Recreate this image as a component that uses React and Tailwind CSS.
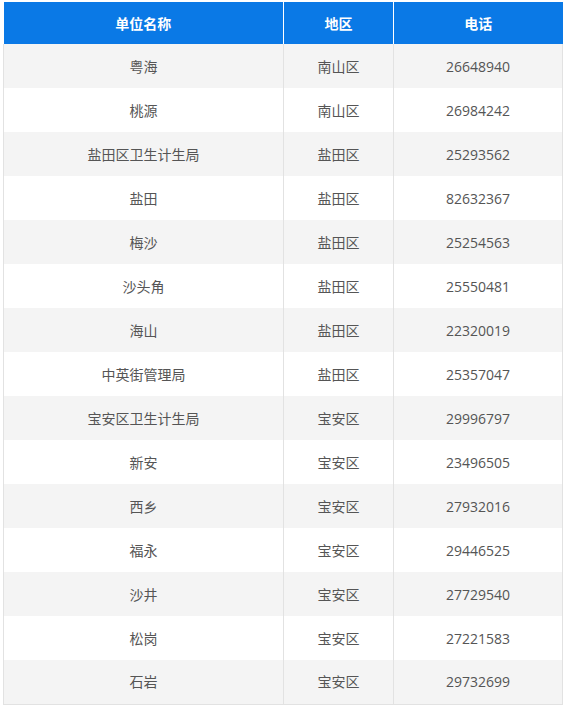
import React from "react";

const rows = [
  ["粤海", "南山区", "26648940"],
  ["桃源", "南山区", "26984242"],
  ["盐田区卫生计生局", "盐田区", "25293562"],
  ["盐田", "盐田区", "82632367"],
  ["梅沙", "盐田区", "25254563"],
  ["沙头角", "盐田区", "25550481"],
  ["海山", "盐田区", "22320019"],
  ["中英街管理局", "盐田区", "25357047"],
  ["宝安区卫生计生局", "宝安区", "29996797"],
  ["新安", "宝安区", "23496505"],
  ["西乡", "宝安区", "27932016"],
  ["福永", "宝安区", "29446525"],
  ["沙井", "宝安区", "27729540"],
  ["松岗", "宝安区", "27221583"],
  ["石岩", "宝安区", "29732699"],
];

export default function App() {
  return (
    <div className="bg-white w-[565px] h-[710px] pt-[2px] pl-[3px] font-['Open_Sans','Noto_Sans_CJK_SC',sans-serif]">
      <table className="border-collapse table-fixed w-[559px] text-[14px] text-[#555]">
        <colgroup>
          <col className="w-[280px]" />
          <col className="w-[110px]" />
          <col className="w-[169px]" />
        </colgroup>
        <thead>
          <tr className="h-[42px] bg-[#0a79e6] text-white">
            <th className="font-bold border-r border-[#ffffff] text-center">单位名称</th>
            <th className="font-bold border-r border-[#ffffff] text-center">地区</th>
            <th className="font-bold text-center">电话</th>
          </tr>
        </thead>
        <tbody className="border-b border-[#e2e2e2]">
          {rows.map((r, i) => (
            <tr key={i} className={`h-[44px] ${i % 2 === 0 ? "bg-[#f4f4f4]" : "bg-white"}`}>
              <td className="border-x border-[#e2e2e2] text-center">{r[0]}</td>
              <td className="border-x border-[#e2e2e2] text-center">{r[1]}</td>
              <td className="border-x border-[#e2e2e2] text-center">{r[2]}</td>
            </tr>
          ))}
        </tbody>
      </table>
    </div>
  );
}
